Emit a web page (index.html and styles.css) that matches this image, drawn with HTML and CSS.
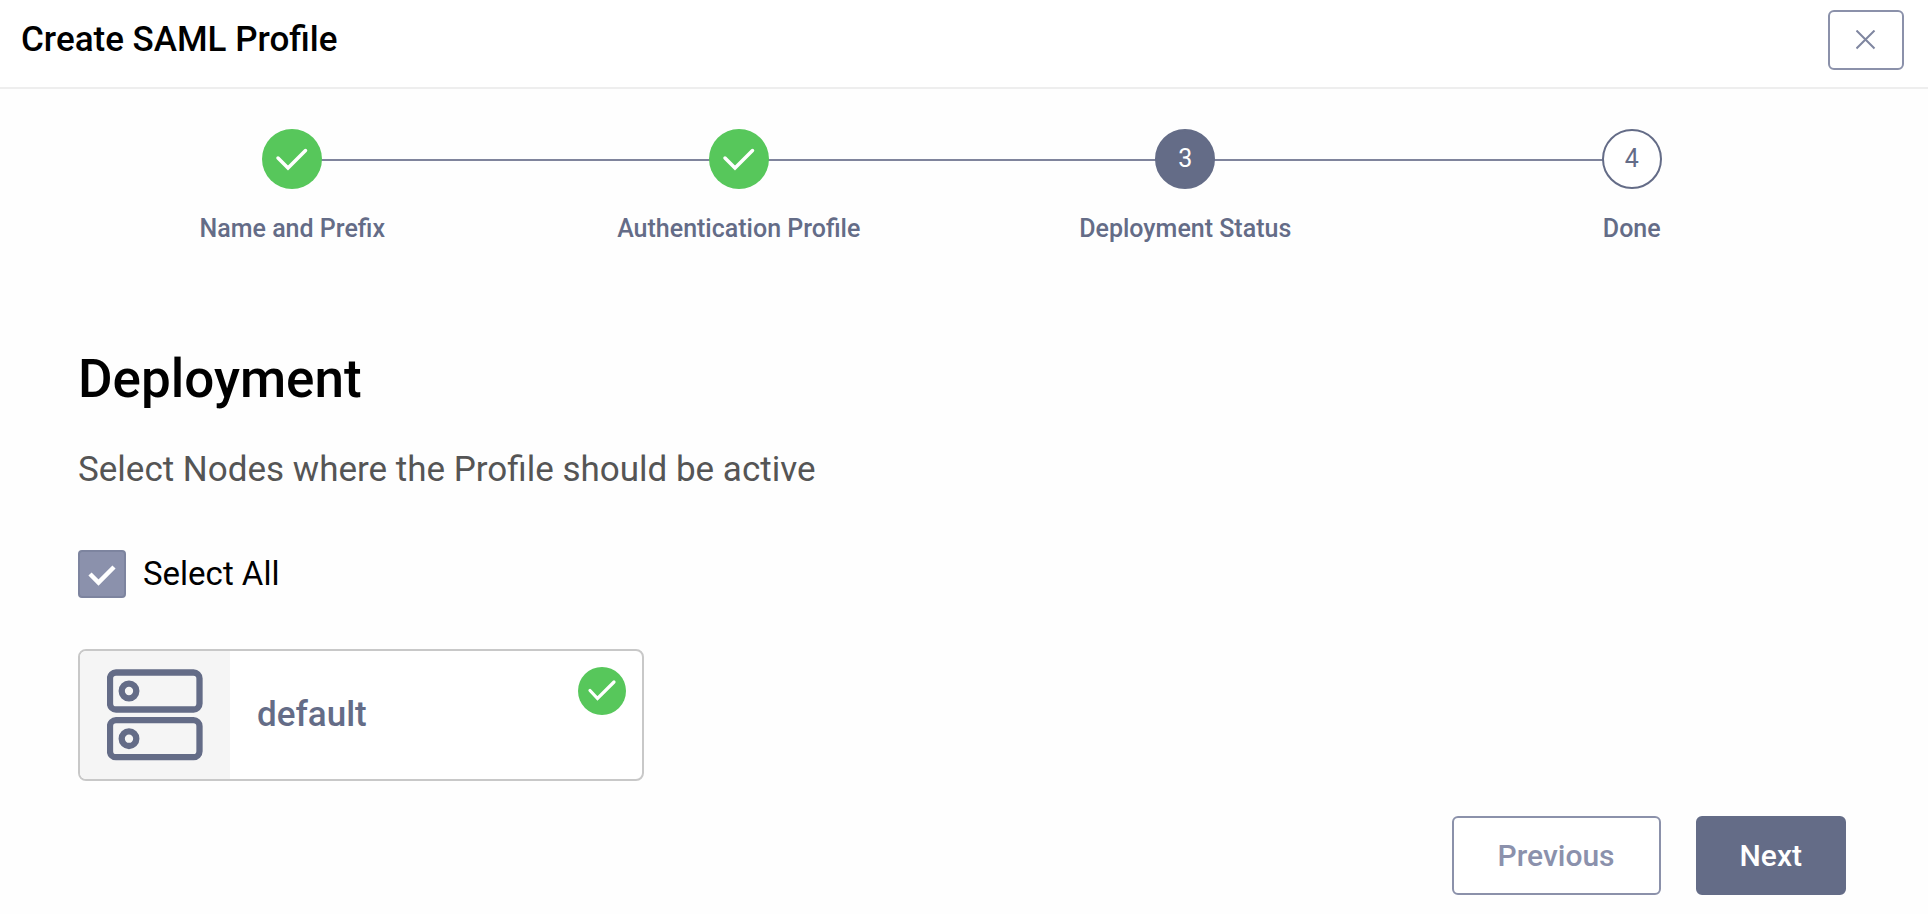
FILE: index.html
```html
<!DOCTYPE html>
<html lang="en">
<head>
<meta charset="utf-8">
<meta name="viewport" content="width=device-width, initial-scale=1">
<title>Create SAML Profile</title>
<link rel="stylesheet" href="styles.css">
</head>
<body>
<header class="header">
  <h1 class="header-title">Create SAML Profile</h1>
  <button class="close" type="button" aria-label="Close">
    <svg width="20" height="20" viewBox="0 0 20 20" fill="none" stroke="currentColor" stroke-width="2"><path d="M0.500 0.500L18.500 18.500M18.500 0.500L0.500 18.500"/></svg>
  </button>
</header>
<main>
  <ol class="steps">
    <li class="step">
      <span class="marker marker-done"><svg width="60" height="60" viewBox="0 0 60 60" fill="none" stroke="currentColor" stroke-width="3.500" stroke-linecap="round"><path d="M16 29L26 39L43.500 21.500"/></svg></span>
      <span class="step-label">Name and Prefix</span>
    </li>
    <li class="step">
      <span class="marker marker-done"><svg width="60" height="60" viewBox="0 0 60 60" fill="none" stroke="currentColor" stroke-width="3.500" stroke-linecap="round"><path d="M16 29L26 39L43.500 21.500"/></svg></span>
      <span class="step-label">Authentication Profile</span>
    </li>
    <li class="step" aria-current="step">
      <span class="marker marker-active">3</span>
      <span class="step-label">Deployment Status</span>
    </li>
    <li class="step">
      <span class="marker">4</span>
      <span class="step-label">Done</span>
    </li>
  </ol>
  <section class="content">
    <h2 class="heading">Deployment</h2>
    <p class="subtitle">Select Nodes where the Profile should be active</p>
    <label class="select-all">
      <span class="check">
        <input class="check-input" type="checkbox" checked>
        <svg class="check-icon" width="48" height="48" viewBox="0 0 48 48" fill="none" stroke="currentColor" stroke-width="4.500"><path d="M12 24L20.500 32.500L36 17"/></svg>
      </span>
      <span>Select All</span>
    </label>
    <button class="node" type="button" aria-pressed="true">
      <span class="node-icon">
        <svg width="96" height="92" viewBox="0 0 96 92" fill="none" stroke="currentColor" stroke-width="6.300">
          <rect x="3" y="3.500" width="89.500" height="37" rx="6"/>
          <rect x="3" y="51.200" width="89.500" height="37" rx="6"/>
          <circle cx="22" cy="22" r="7.300"/>
          <circle cx="22" cy="69.700" r="7.300"/>
        </svg>
      </span>
      <span class="node-name">default</span>
      <svg class="node-badge" width="48" height="48" viewBox="0 0 48 48" fill="none" stroke="currentColor" stroke-width="3.200" stroke-linecap="round"><path d="M12 23.500L19.500 31.500L36 15"/></svg>
    </button>
    <footer class="actions">
      <button class="btn" type="button">Previous</button>
      <button class="btn btn-primary" type="button">Next</button>
    </footer>
  </section>
</main>
</body>
</html>
```
FILE: styles.css
```css
* {
  box-sizing: border-box;
}

body {
  margin: 0;
  background: #fefefe;
  color: #000;
  font-family: Roboto, "Liberation Sans", sans-serif;
}

button {
  font-family: inherit;
  cursor: pointer;
}

svg {
  display: block;
}

.header {
  display: flex;
  align-items: center;
  justify-content: space-between;
  padding: 10px 24px 17px 21px;
  border-bottom: 2px solid #eee;
  background: #fff;
}

.header-title {
  margin: 0;
  font-size: 35px;
  font-weight: 500;
  line-height: 42px;
}

.close {
  display: grid;
  place-items: center;
  width: 76px;
  height: 60px;
  padding: 0;
  border: 2px solid #8b91aa;
  border-radius: 6px;
  background: #fff;
  color: #7f86a0;
}

.steps {
  display: grid;
  grid-template-columns: repeat(4, 1fr);
  margin: 0;
  padding: 40px 73px 0 69px;
  list-style: none;
}

.step {
  position: relative;
  display: flex;
  flex-direction: column;
  align-items: center;
  gap: 26px;
}

/* Connector from this marker to the next one */
.step:not(:last-child)::after {
  content: "";
  position: absolute;
  top: 30px;
  left: 50%;
  width: 100%;
  height: 2px;
  background: #7f849c;
}

.marker {
  position: relative;
  z-index: 1;
  display: grid;
  place-items: center;
  width: 60px;
  height: 60px;
  border: 2px solid #646c87;
  border-radius: 50%;
  background: #fff;
  color: #646c87;
  font-size: 25px;
  line-height: 28px;
}

.marker-done {
  border: 0;
  background: #57c75b;
  color: #fff;
}

.marker-active {
  background: #646c87;
  color: #fff;
}

.step-label {
  color: #646c87;
  font-size: 25px;
  font-weight: 500;
  line-height: 28px;
}

.content {
  display: flex;
  flex-direction: column;
  align-items: flex-start;
  padding: 106px 82px 18px 78px;
}

.heading {
  margin: 0 0 40px;
  font-size: 53px;
  font-weight: 500;
  line-height: 60px;
}

.subtitle {
  margin: 0 0 59px;
  color: #555;
  font-size: 35px;
  line-height: 42px;
}

.select-all {
  display: flex;
  align-items: center;
  gap: 17px;
  margin-bottom: 51px;
  font-size: 33px;
  line-height: 40px;
}

.check {
  display: grid;
}

.check-input,
.check-icon {
  grid-area: 1 / 1;
}

.check-input {
  appearance: none;
  width: 48px;
  height: 48px;
  margin: 0;
  border: 2px solid #7d849f;
  border-radius: 4px;
  background: #8b91ac;
}

.check-icon {
  z-index: 1;
  visibility: hidden;
  color: #fff;
  pointer-events: none;
}

.check-input:checked + .check-icon {
  visibility: visible;
}

.node {
  display: flex;
  align-items: stretch;
  width: 566px;
  max-width: 100%;
  height: 132px;
  margin-bottom: 35px;
  padding: 0;
  overflow: hidden;
  border: 2px solid #c8c8c8;
  border-radius: 8px;
  background: #fff;
  color: #646c87;
}

.node-icon {
  display: grid;
  place-items: center;
  width: 150px;
  background: #f5f5f5;
}

.node-name {
  flex: 1;
  align-self: center;
  padding-left: 27px;
  font-size: 35px;
  font-weight: 500;
  line-height: 42px;
  text-align: left;
}

.node-badge {
  margin: 16px;
  border-radius: 50%;
  background: #57c75b;
  color: #fff;
}

.actions {
  display: flex;
  gap: 35px;
  align-self: flex-end;
}

.btn {
  padding: 20px 44px;
  border: 2px solid #8b91aa;
  border-radius: 6px;
  background: #fff;
  color: #8b91ac;
  font-size: 30px;
  font-weight: 500;
  line-height: 35px;
}

.btn-primary {
  padding: 20px 42px;
  border-color: #646c87;
  background: #646c87;
  color: #fff;
}
```
